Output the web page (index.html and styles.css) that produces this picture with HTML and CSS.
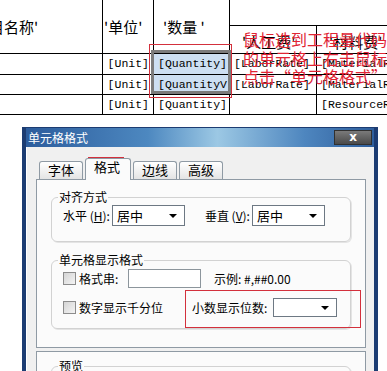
FILE: index.html
```html
<!doctype html>
<html>
<head>
    <title>单元格格式</title>
    <link rel="stylesheet" href="styles.css">
</head>

<body>
    <table class="sheet">
        <colgroup>
            <col class="c1"><col class="c2"><col class="c3"><col class="c4"><col class="c5">
        </colgroup>
        <tr class="h1">
            <td rowspan="2" class="head name">项目名称'</td>
            <td rowspan="2" class="head">'单位'</td>
            <td rowspan="2" class="head qty">'数量 '</td>
            <td colspan="2" class="blank"></td>
        </tr>
        <tr class="h2">
            <td class="sub">'人工费'</td>
            <td class="sub">'材料费'</td>
        </tr>
        <tr class="r1">
            <td></td>
            <td class="code right">[Unit]</td>
            <td class="code sel">[Quantity]</td>
            <td class="code">[LaborRate]</td>
            <td class="code">[MaterialRate]</td>
        </tr>
        <tr class="r2">
            <td></td>
            <td class="code right">[Unit]</td>
            <td class="code sel">[QuantityV]</td>
            <td class="code">[LaborRate]</td>
            <td class="code">[MaterialRate]</td>
        </tr>
        <tr class="r3">
            <td></td>
            <td class="code right">[Unit]</td>
            <td class="code">[Quantity]</td>
            <td class="code"></td>
            <td class="code">[ResourceRate]</td>
        </tr>
    </table>

    <div class="selbox"></div>
    <div class="mark mark-cells"></div>
    <p class="note">鼠标选到工程量代码<br>的单元格上右击鼠标<br>点击“单元格格式”</p>

    <div class="dialog">
        <div class="titlebar">
            <span class="title">单元格格式</span>
            <span class="close">x</span>
        </div>
        <div class="body">
            <div class="tabs">
                <span class="tab">字体</span>
                <span class="tab active">格式</span>
                <span class="tab">边线</span>
                <span class="tab">高级</span>
            </div>
            <div class="panel">
                <div class="group">
                    <span class="legend">对齐方式</span>
                    <div class="row">
                        <span class="lbl">水平 (<u>H</u>):</span>
                        <span class="select">居中<i class="arrow"></i></span>
                        <span class="lbl lbl-v">垂直 (<u>V</u>):</span>
                        <span class="select">居中<i class="arrow"></i></span>
                    </div>
                </div>
                <div class="group group2">
                    <span class="legend">单元格显示格式</span>
                    <div class="row">
                        <span class="check"></span>
                        <span class="lbl lbl-fmt">格式串:</span>
                        <span class="input"></span>
                        <span class="sample">示例: #,##0.00</span>
                    </div>
                    <div class="row row2">
                        <span class="check"></span>
                        <span class="lbl lbl-thou">数字显示千分位</span>
                        <span class="lbl lbl-dec">小数显示位数:</span>
                        <span class="select small"><i class="arrow"></i></span>
                    </div>
                </div>
            </div>
            <div class="panel panel2">
                <div class="group group3">
                    <span class="legend">预览</span>
                </div>
            </div>
        </div>
    </div>

    <div class="mark mark-tab"></div>
    <div class="mark mark-dec"></div>
</body>
</html>
```

FILE: styles.css
```css
html, body {
    margin: 0;
    padding: 0;
}
body {
    width: 387px;
    height: 371px;
    overflow: hidden;
    position: relative;
    background: #ffffff;
    font-family: "Noto Sans CJK SC", sans-serif;
    color: #000;
}

/* spreadsheet */
.sheet {
    border-collapse: collapse;
    table-layout: fixed;
    width: 476px;
    margin-left: -40px;
}
.c1 { width: 142px; }
.c2 { width: 51px; }
.c3 { width: 76px; }
.c4 { width: 87px; }
.c5 { width: 120px; }
.sheet td {
    border: 1px solid #000;
    padding: 0;
    white-space: nowrap;
    overflow: hidden;
    font-size: 12px;
    line-height: 14px;
}
.sheet tr.h1 td { border-top: none; }
.h1 td.blank { height: 25px; }
.h2 td { height: 25px; }
.r1 td { height: 20px; }
.r2 td, .r3 td { height: 19px; }
.sheet td.head {
    font-size: 15px;
    line-height: 18px;
    vertical-align: middle;
    padding-left: 1px;
}
.sheet td.name { padding-left: 13px; }
.sheet td.qty { padding-left: 9px; }
.sheet td.sub {
    font-size: 15px;
    line-height: 18px;
    padding-left: 12px;
    vertical-align: bottom;
    padding-bottom: 2px;
}
.sheet td.code {
    font-family: "Liberation Mono", monospace;
    font-size: 11.5px;
    padding-left: 4px;
}
.sheet td.code.right {
    text-align: right;
    padding-right: 4px;
    padding-left: 0;
}
.code.sel {
    background: #cddff2;
}

.selbox {
    position: absolute;
    left: 151px;
    top: 50px;
    width: 74px;
    height: 38px;
    border: 3px solid #7b7b7b;
}
.mark {
    position: absolute;
    border: 1px solid #d3303c;
}
.mark-cells { left: 149px; top: 44px; width: 81px; height: 52px; }
.mark-tab { left: 88px; top: 157px; width: 34px; height: 13px; }
.mark-dec { left: 185px; top: 290px; width: 174px; height: 36px; }

.note {
    position: absolute;
    left: 243px;
    top: 30px;
    margin: 0;
    font-size: 16px;
    line-height: 18.5px;
    color: #e02434;
    white-space: nowrap;
}

/* dialog */
.dialog {
    width: 356px;
    margin: 12px 0 0 22px;
    box-sizing: border-box;
    border-left: 4px solid #1c3c72;
    border-right: 4px solid #1c3c72;
    border-top: 1px solid #1c3c72;
    background: #f0f0f0;
    font-size: 12px;
}
.titlebar {
    height: 19px;
    position: relative;
    background: linear-gradient(to right, #2c5c9c 0%, #4d88c0 35%, #9cc8e4 55%, #4e86bf 80%, #2e5e9c 100%);
}
.title {
    color: #fff;
    font-size: 12px;
    line-height: 19px;
    padding-left: 2px;
}
.close {
    position: absolute;
    right: 2px;
    top: 2px;
    width: 36px;
    height: 13px;
    background: linear-gradient(#7a7a7a, #4a4a4a);
    border: 1px solid #303030;
    color: #fff;
    font-family: "DejaVu Sans", sans-serif;
    font-weight: bold;
    font-size: 12px;
    line-height: 12px;
    text-align: center;
}
.body {
    padding: 12px 9px 0 9px;
    border-left: 1px solid #fff;
}
.tabs {
    display: flex;
    gap: 2px;
    padding-left: 3px;
    height: 20px;
    align-items: flex-end;
    position: relative;
    z-index: 1;
}
.tab {
    font-size: 13px;
    line-height: 16px;
    height: 17px;
    padding: 0 8px;
    width: 26px;
    border: 1px solid #8f9aa4;
    border-bottom: none;
    border-radius: 3px 3px 0 0;
    background: linear-gradient(#ffffff, #e4e4e4);
}
.tab.active {
    height: 21px;
    background: #fbfbfb;
    margin-bottom: -1px;
    width: 28px;
}
.panel {
    width: 330px;
    height: 169px;
    box-sizing: border-box;
    border: 1px solid #8f9aa4;
    background: #fbfbfb;
    padding: 17px 14px 0 14px;
}
.panel2 {
    margin-top: 3px;
    height: 40px;
    padding-top: 14px;
}
.group {
    padding: 0 11px 15px 11px;
    border: 1px solid #d2d2d2;
    border-radius: 6px;
    box-shadow: 1px 1px 0 #e4e4e4;
}
.group2 {
    margin-top: 18px;
    padding-bottom: 11px;
}
.group3 { height: 40px; }
.legend {
    display: table;
    margin: -8px 0 0 -5px;
    padding: 0 1px;
    background: #fbfbfb;
    font-size: 12px;
    line-height: 14px;
}
.row {
    display: flex;
    align-items: center;
    height: 21px;
    margin-top: 1px;
    white-space: nowrap;
}
.row2 { margin-top: 8px; height: 20px; }
.row > span { flex-shrink: 0; }
.lbl { margin-right: 2px; }
.lbl-v { margin-left: 20px; }
.select {
    position: relative;
    width: 73px;
    height: 21px;
    box-sizing: border-box;
    border: 1px solid #6d7883;
    background: #fff;
    padding-left: 4px;
    font-size: 13px;
    line-height: 19px;
}
.select.small { width: 64px; height: 19px; }
.arrow {
    position: absolute;
    right: 7px;
    top: 8px;
    width: 0;
    height: 0;
    border-left: 4px solid transparent;
    border-right: 4px solid transparent;
    border-top: 4px solid #000;
}
.select.small .arrow { top: 7px; }
.check {
    width: 11px;
    height: 11px;
    border: 1px solid #8c8c8c;
    background: linear-gradient(135deg, #d4d4d4, #f4f4f4);
    margin-right: 3px;
}
.lbl-fmt { width: 49px; margin-right: 0; }
.input {
    width: 73px;
    height: 19px;
    box-sizing: border-box;
    border: 1px solid #8c959c;
    background: #fff;
}
.sample { margin-left: 13px; }
.lbl-thou { margin-right: 29px; }
.lbl-dec { margin-right: 6px; }
```
